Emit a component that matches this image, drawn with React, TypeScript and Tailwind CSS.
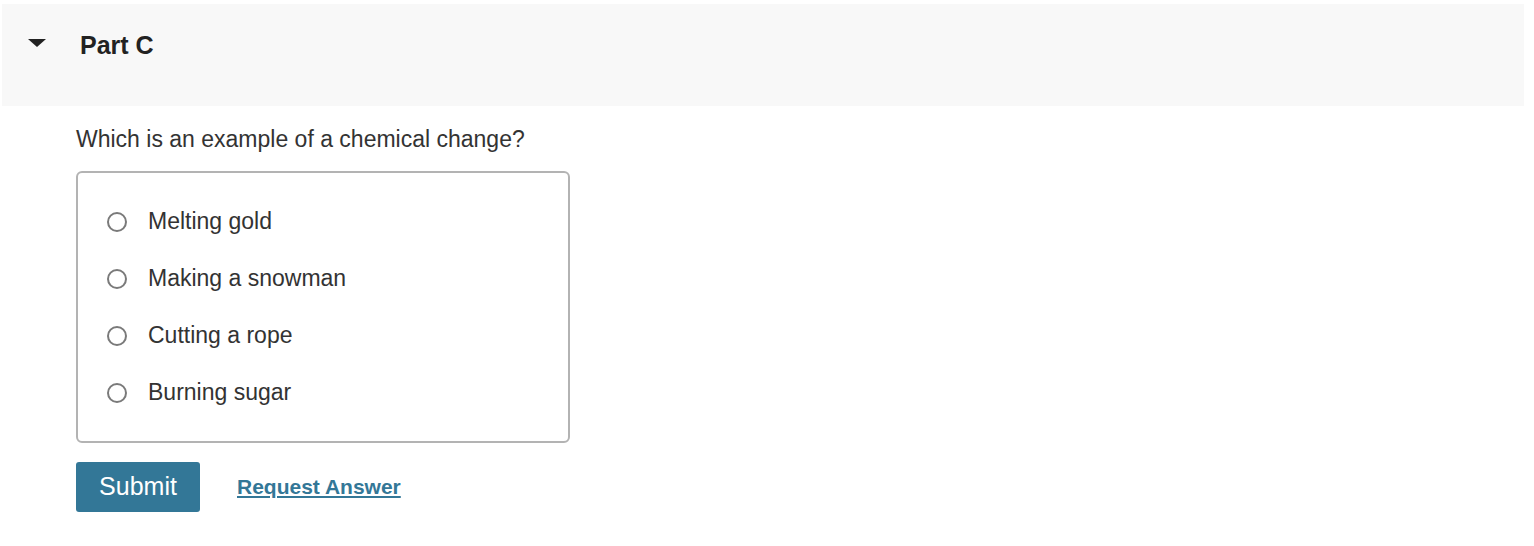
const options = ['Melting gold', 'Making a snowman', 'Cutting a rope', 'Burning sugar'];

export default function App() {
  return (
    <div className="min-h-[546px] bg-white pt-1 pl-0.5 pr-[10px] text-[#333]" style={{ fontFamily: '"Liberation Sans", Arial, sans-serif' }}>
      <div className="flex h-[102px] items-center bg-[#f8f8f8]">
        <svg width="18" height="8" viewBox="0 0 18 8" className="ml-[26px] -mt-[24px]">
          <path d="M0 0 L18 0 L9 8 Z" fill="#222" />
        </svg>
        <span className="ml-[34px] -mt-[20px] text-[25px] font-bold leading-[28px] text-[#222]">Part C</span>
      </div>
      <div className="pl-[74px]">
        <p className="mt-[19px] text-[23px] leading-[28px]">Which is an example of a chemical change?</p>
        <div className="mt-[18px] w-[494px] rounded-md border-2 border-[#b3b3b3] px-[29px] pt-[20px] pb-[20px]">
          {options.map((o) => (
            <label key={o} className="flex h-[57px] items-center">
              <span className="h-[20px] w-[20px] rounded-full border-2 border-[#7a7a7a] bg-white" />
              <span className="ml-[21px] text-[23px]">{o}</span>
            </label>
          ))}
        </div>
        <div className="mt-[19px] flex items-center">
          <button className="h-[50px] w-[124px] rounded-[3px] bg-[#337797] text-[25px] text-white">Submit</button>
          <a href="#" className="ml-[37px] text-[21px] font-bold text-[#337797] underline underline-offset-2">Request Answer</a>
        </div>
      </div>
    </div>
  );
}
